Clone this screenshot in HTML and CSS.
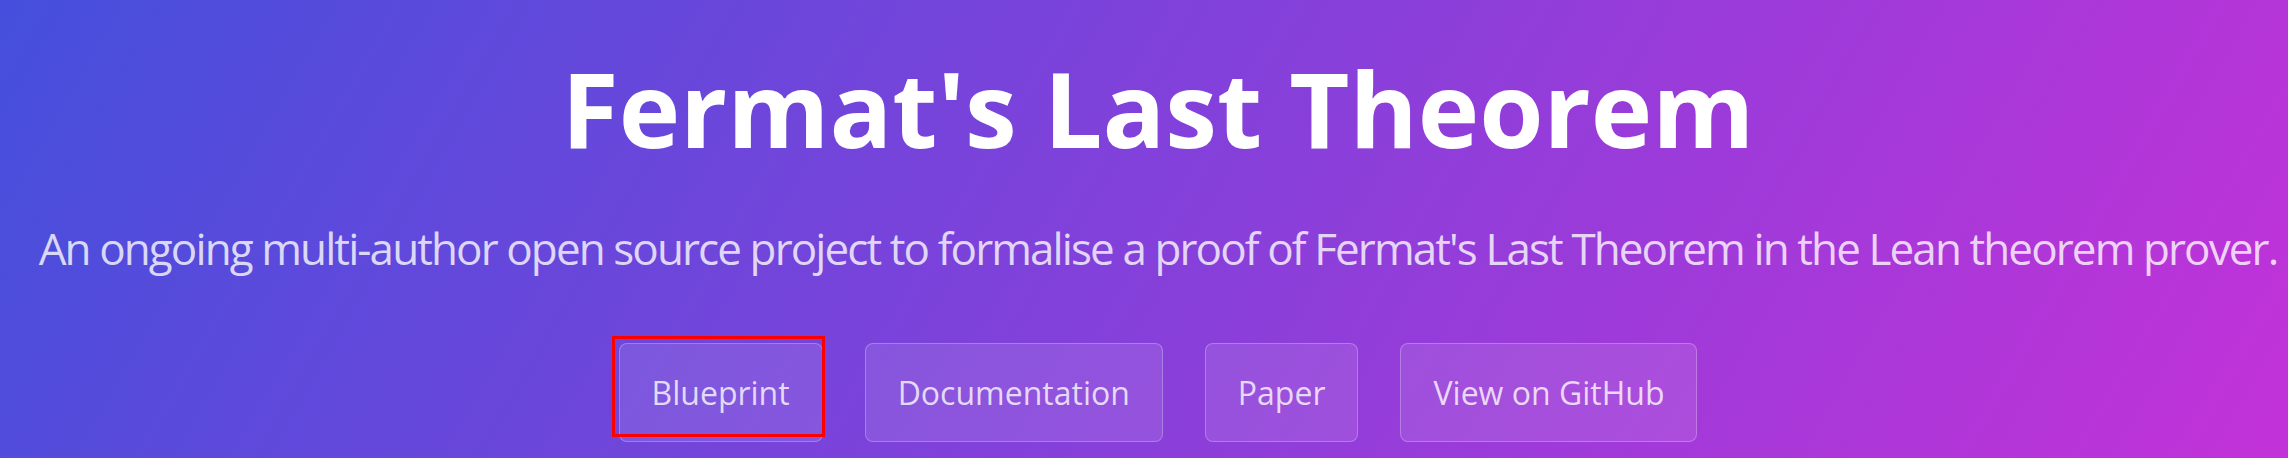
FILE: index.html
```html
<!DOCTYPE html>
<html lang="en">
<head>
<meta charset="utf-8">
<title>Fermat's Last Theorem</title>
<link rel="stylesheet" href="styles.css">
</head>
<body>
<section class="hero">
  <h1 class="hero-title">Fermat's Last Theorem</h1>
  <p class="hero-subtitle">An ongoing multi-author open source project to formalise a proof of Fermat's Last Theorem in the Lean theorem prover.</p>
  <nav class="hero-actions">
    <a class="btn btn-selected" href="#">Blueprint<span class="highlight"></span></a>
    <a class="btn" href="#">Documentation</a>
    <a class="btn" href="#">Paper</a>
    <a class="btn" href="#">View on GitHub</a>
  </nav>
</section>
</body>
</html>
```

FILE: styles.css
```css
html, body {
  margin: 0;
  padding: 0;
}

body {
  font-family: "Open Sans", "Liberation Sans", sans-serif;
}

.hero {
  box-sizing: border-box;
  height: 458px;
  padding: 45px 0 0 28px;
  display: flex;
  flex-direction: column;
  align-items: center;
  background: linear-gradient(120deg, #454fdc 0%, #c232d8 100%);
  overflow: hidden;
}

.hero-title {
  margin: 0;
  font-size: 104px;
  line-height: 125px;
  font-weight: 700;
  color: #ffffff;
  white-space: nowrap;
}

.hero-subtitle {
  margin: 45px 0 0;
  font-size: 44px;
  line-height: 66px;
  letter-spacing: -1.9px;
  color: rgba(255, 255, 255, 0.78);
  white-space: nowrap;
}

.hero-actions {
  margin-top: 62px;
  display: flex;
  gap: 42px;
}

.btn {
  position: relative;
  display: block;
  padding: 25px 32px;
  font-size: 32px;
  line-height: 47px;
  color: rgba(255, 255, 255, 0.78);
  text-decoration: none;
  background: rgba(255, 255, 255, 0.1);
  border: 1px solid rgba(255, 255, 255, 0.25);
  border-radius: 8px;
}

.highlight {
  position: absolute;
  left: -8px;
  top: -8px;
  width: 213px;
  height: 101px;
  box-sizing: border-box;
  border: 3px solid #ff0000;
}
```
